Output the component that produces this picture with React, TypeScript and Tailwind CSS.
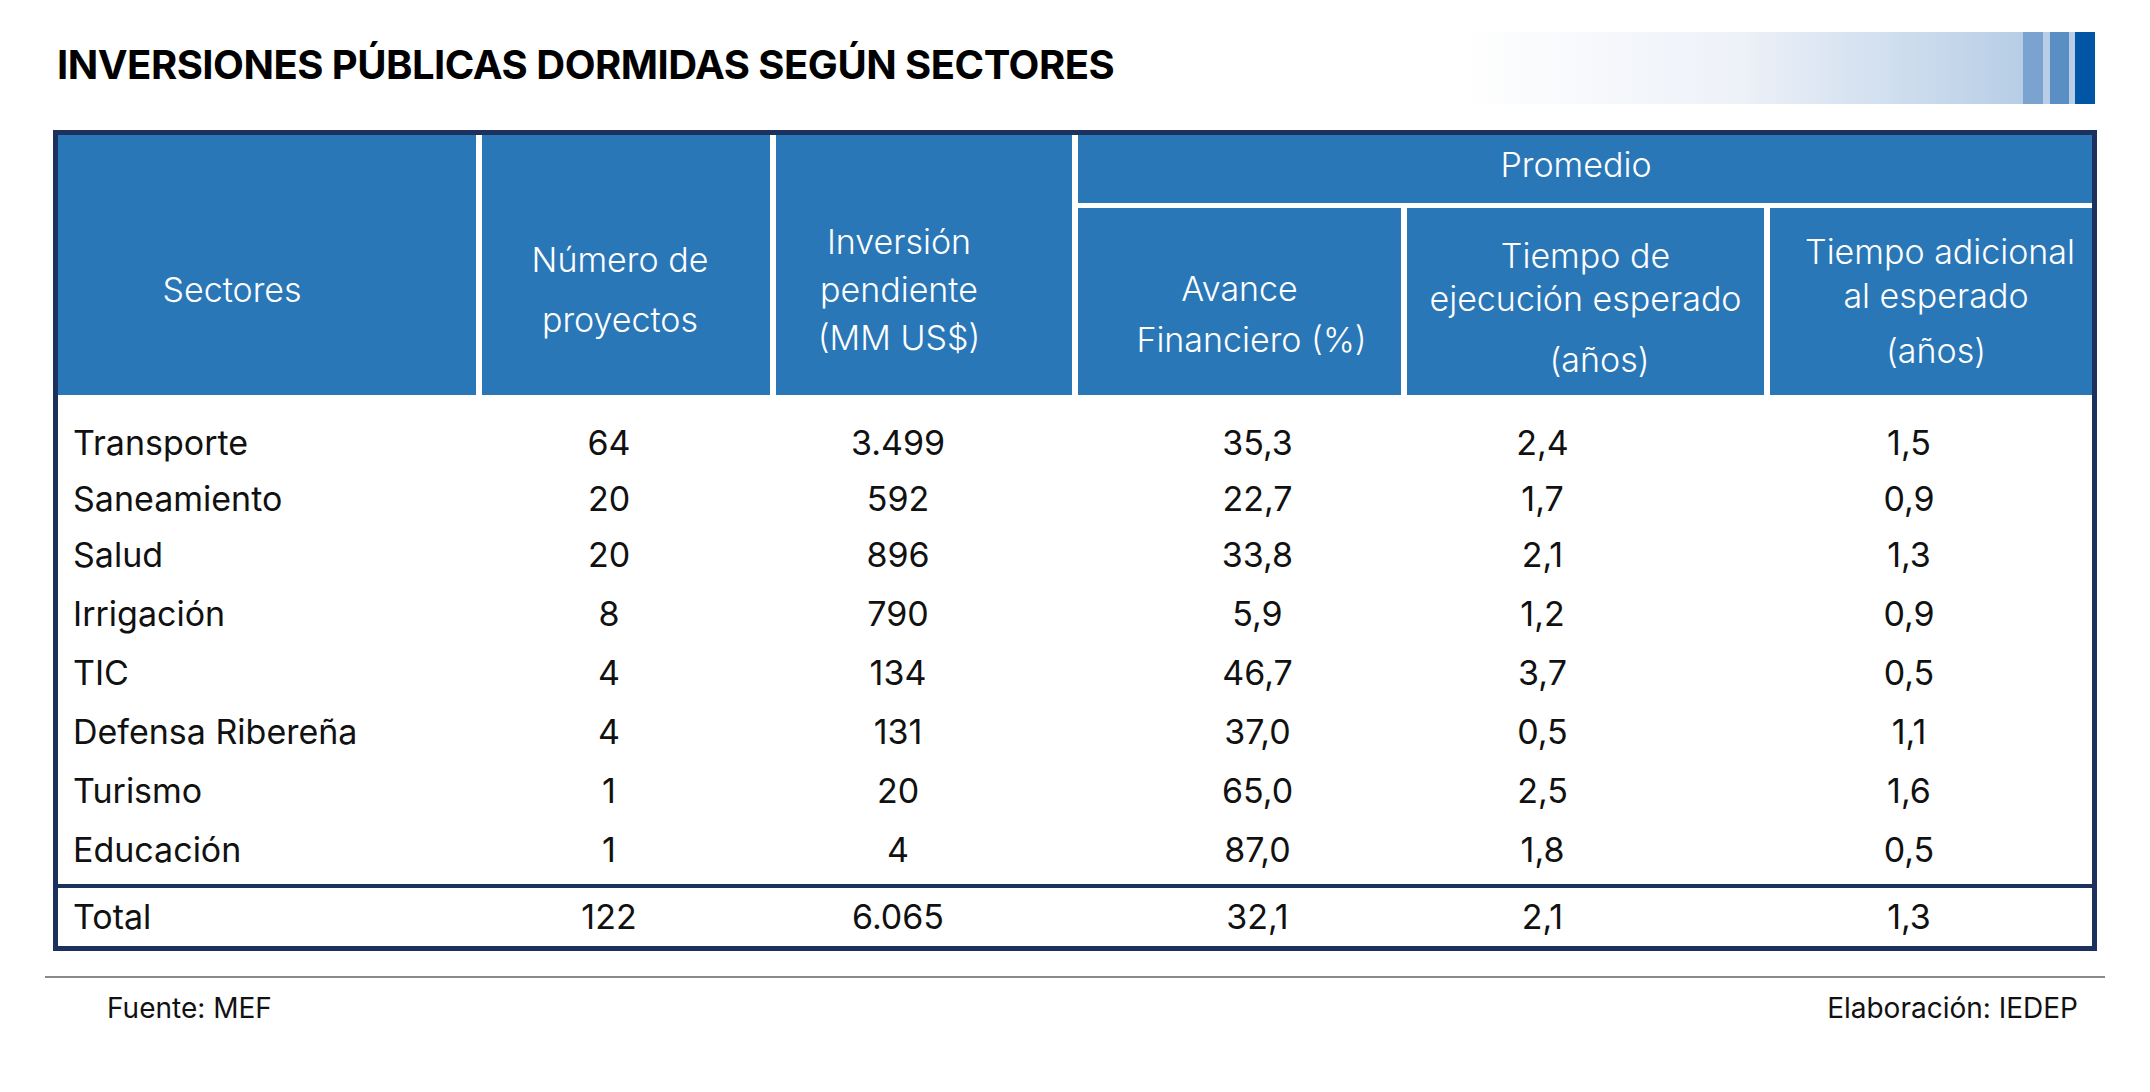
import React from "react";

const font = { fontFamily: "Inter, 'Noto Sans', 'Liberation Sans', sans-serif" };

const rows: [string, string, string, string, string, string][] = [
  ["Transporte", "64", "3.499", "35,3", "2,4", "1,5"],
  ["Saneamiento", "20", "592", "22,7", "1,7", "0,9"],
  ["Salud", "20", "896", "33,8", "2,1", "1,3"],
  ["Irrigación", "8", "790", "5,9", "1,2", "0,9"],
  ["TIC", "4", "134", "46,7", "3,7", "0,5"],
  ["Defensa Ribereña", "4", "131", "37,0", "0,5", "1,1"],
  ["Turismo", "1", "20", "65,0", "2,5", "1,6"],
  ["Educación", "1", "4", "87,0", "1,8", "0,5"],
];

const offsets = ["mt-0", "-mt-[2px]", "-mt-[2px]", "mt-[1px]", "mt-[1px]", "mt-[1px]", "mt-[1px]", "mt-[1px]"];

function BodyRow({ r, cls = "" }: { r: [string, string, string, string, string, string]; cls?: string }) {
  return (
    <div className={`grid grid-cols-[418px_288px_296px_323px_357px_322px] gap-x-[6px] h-[58px] items-center text-[34px] leading-none text-[#111] ${cls}`}>
      <div className="pl-[15px] text-left whitespace-nowrap">{r[0]}</div>
      <div className="text-center pr-[34px]">{r[1]}</div>
      <div className="text-center pr-[52px]">{r[2]}</div>
      <div className="text-center pl-[36px]">{r[3]}</div>
      <div className="text-center pr-[86px]">{r[4]}</div>
      <div className="text-center pr-[44px]">{r[5]}</div>
    </div>
  );
}

export default function App() {
  return (
    <div className="w-[2150px] h-[1092px] bg-white overflow-hidden" style={font}>
      {/* Top bar */}
      <div className="flex items-start justify-between pl-[57px] pr-[55px] pt-[32px]">
        <h1 className="mt-[13px] text-[40px] leading-[40px] font-bold text-black tracking-[-0.5px] whitespace-nowrap">
          INVERSIONES PÚBLICAS DORMIDAS SEGÚN SECTORES
        </h1>
        <div className="flex w-[635px] h-[72px] bg-[#b7cee6]">
          <div className="flex-1 bg-gradient-to-r from-white via-[#edf1f8] to-[#b7cee6]" />
          <div className="w-[20px] bg-[#7aa3cf]" />
          <div className="w-[7px]" />
          <div className="w-[19px] bg-[#5a8fc6]" />
          <div className="w-[6px]" />
          <div className="w-[20px] bg-[#0055a4]" />
        </div>
      </div>

      {/* Table */}
      <div className="ml-[53px] mt-[26px] w-[2044px] border-[5px] border-[#1d315f] bg-white">
        {/* Header */}
        <div className="grid grid-cols-[418px_288px_296px_323px_357px_322px] grid-rows-[68px_187px] gap-x-[6px] gap-y-[5px] text-white text-[34px] font-light">
          <div className="row-span-2 bg-[#2a77b8] flex items-center justify-center pt-[50px] pr-[70px] leading-none">
            Sectores
          </div>
          <div className="row-span-2 bg-[#2a77b8] flex flex-col items-center justify-center pt-[50px] pr-[12px] leading-[60px]">
            <span>Número de</span>
            <span>proyectos</span>
          </div>
          <div className="row-span-2 bg-[#2a77b8] flex flex-col items-center justify-center pt-[50px] pr-[50px] leading-[48px]">
            <span>Inversión</span>
            <span>pendiente</span>
            <span>(MM US$)</span>
          </div>
          <div className="col-span-3 bg-[#2a77b8] flex items-center justify-center pb-[8px] pr-[18px] leading-none">
            Promedio
          </div>
          <div className="bg-[#2a77b8] flex flex-col items-center justify-center pt-[24px] leading-[51px] whitespace-nowrap">
            <span>Avance</span>
            <span className="pl-[24px]">Financiero (%)</span>
          </div>
          <div className="bg-[#2a77b8] flex flex-col items-center justify-center pt-[11px] whitespace-nowrap">
            <div className="flex flex-col items-center leading-[43px]">
              <span>Tiempo de</span>
              <span>ejecución esperado</span>
            </div>
            <span className="mt-[18px] leading-[43px] pl-[28px]">(años)</span>
          </div>
          <div className="bg-[#2a77b8] flex flex-col items-center justify-center pl-[10px] whitespace-nowrap">
            <div className="flex flex-col items-center leading-[44px]">
              <span className="pl-[8px]">Tiempo adicional</span>
              <span>al esperado</span>
            </div>
            <span className="mt-[11px] leading-[44px]">(años)</span>
          </div>
        </div>

        {/* Body */}
        <div className="pt-[19px] pb-[5px]">
          {rows.map((r, i) => (
            <BodyRow key={r[0]} r={r} cls={offsets[i]} />
          ))}
        </div>
        <div className="h-[4px] bg-[#1d315f]" />
        <BodyRow r={["Total", "122", "6.065", "32,1", "2,1", "1,3"]} />
      </div>

      {/* Footer */}
      <div className="ml-[45px] mt-[25px] w-[2060px] h-[2px] bg-[#8a8a8a]" />
      <div className="flex justify-between pl-[107px] pr-[72px] mt-[16px] text-[28px] leading-none text-[#111]">
        <span>Fuente: MEF</span>
        <span>Elaboración: IEDEP</span>
      </div>
    </div>
  );
}
